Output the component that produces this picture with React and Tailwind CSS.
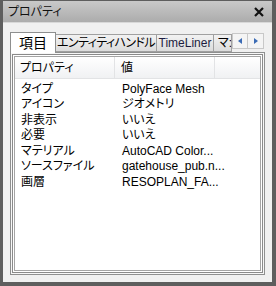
import React from "react";

const rows = [
  ["タイプ", "PolyFace Mesh"],
  ["アイコン", "ジオメトリ"],
  ["非表示", "いいえ"],
  ["必要", "いいえ"],
  ["マテリアル", "AutoCAD Color..."],
  ["ソースファイル", "gatehouse_pub.n..."],
  ["画層", "RESOPLAN_FA..."],
];

const font = { fontFamily: '"Liberation Sans", "Noto Sans CJK JP", sans-serif' };

export default function App() {
  return (
    <div
      className="w-[276px] h-[286px] bg-[#5e5e5e] pl-[3px] pr-[4px] pb-[4px] pt-[1px] flex flex-col text-[12px] text-black leading-none [font-feature-settings:'palt']"
      style={font}
    >
      <div className="h-[21px] shrink-0 bg-gradient-to-b from-[#c9c9c9] to-[#acacac] flex items-center justify-between pl-[5px] pr-[8px]">
        <span className="text-[12px] text-[#111]">プロパティ</span>
        <svg width="10" height="10" viewBox="0 0 10 10">
          <path d="M1 1 L9 9 M9 1 L1 9" stroke="#111" strokeWidth="2.2" />
        </svg>
      </div>
      <div className="h-[1px] bg-[#d8d8d8] shrink-0" />
      <div className="flex-1 bg-[#f0f0f0] pl-[7px] pr-[7px] pt-[9px] pb-[7px] flex flex-col">
        {/* tab strip */}
        <div className="h-[20px] flex items-end relative shrink-0 whitespace-nowrap">
          <div className="h-[21px] w-[46px] bg-white border border-[#8e8f8f] border-b-0 flex items-center justify-center relative z-10 -mb-[1px] text-[14px]">
            項目
          </div>
          <div className="h-[18px] bg-gradient-to-b from-[#f2f2f2] to-[#dcdcdc] border border-[#a0a0a0] border-l-0 flex items-center w-[101px] justify-center tracking-[-0.6px]">
            エンティティハンドル
          </div>
          <div className="h-[18px] bg-gradient-to-b from-[#f2f2f2] to-[#dcdcdc] border border-[#a0a0a0] border-l-0 flex items-center w-[57px] justify-center text-[#1c1c40]">
            TimeLiner
          </div>
          <div className="h-[18px] bg-gradient-to-b from-[#f2f2f2] to-[#dcdcdc] border border-[#a0a0a0] border-l-0 flex items-center w-[18px] overflow-hidden pl-[4px]">
            マ:
          </div>
          <div className="absolute right-[1px] top-[1px] flex">
            <div className="w-[16px] h-[16px] border border-[#c8c8c8] bg-[#f4f4f4] flex items-center justify-center">
              <svg width="4" height="6" viewBox="0 0 4 6"><path d="M4 0 L0 3 L4 6 Z" fill="#3b6bb5" /></svg>
            </div>
            <div className="w-[16px] h-[16px] border border-l-0 border-[#c8c8c8] bg-[#f4f4f4] flex items-center justify-center">
              <svg width="4" height="6" viewBox="0 0 4 6"><path d="M0 0 L4 3 L0 6 Z" fill="#3b6bb5" /></svg>
            </div>
          </div>
        </div>
        {/* panel */}
        <div className="flex-1 border border-[#8e8f8f] bg-[#f7f7f7] p-[1px] flex">
          <div className="flex-1 border border-[#8a8a8a] p-[1px] bg-white flex">
            <div className="flex-1 border border-[#a4a4a4] bg-white flex flex-col">
              <div className="h-[22px] flex bg-gradient-to-b from-white to-[#f0f1f3] border-b border-[#e2e3e5]">
                <div className="w-[100px] border-r border-[#e2e3e5] flex items-center pl-[5px]">プロパティ</div>
                <div className="w-[100px] border-r border-[#e2e3e5] flex items-center pl-[6px]">値</div>
                <div className="flex-1" />
              </div>
              <div className="pt-[2px]">
                {rows.map(([k, v]) => (
                  <div key={k} className="h-[15.5px] flex items-center">
                    <div className="w-[100px] pl-[6px] whitespace-nowrap">{k}</div>
                    <div className="pl-[7px] whitespace-nowrap">{v}</div>
                  </div>
                ))}
              </div>
            </div>
          </div>
        </div>
      </div>
    </div>
  );
}
